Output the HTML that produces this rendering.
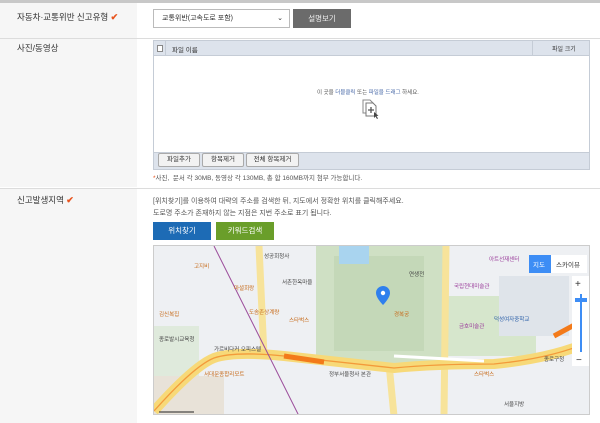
<!DOCTYPE html>
<html><head><meta charset="utf-8"><style>
*{margin:0;padding:0;box-sizing:border-box}
body{width:600px;height:423px;overflow:hidden;background:#fff;font-family:"Liberation Sans","Noto Sans CJK KR",sans-serif;font-size:8px;color:#333;position:relative}
.abs{position:absolute}
.lab{position:absolute;left:0;width:137px;background:#f6f6f6}
.lt{position:absolute;left:17px;font-size:8.5px;color:#333}
.ck{color:#e8541e;font-size:9px;font-weight:bold}
.line{position:absolute;left:0;width:600px;height:1px;background:#dcdcdc}
.btn{position:absolute;border:1px solid #aaa;background:#f2f2f2;border-radius:2px;font-size:6.5px;text-align:center;line-height:12px;height:14px;top:153px;color:#333}
</style></head><body>
<div class="abs" style="left:0;top:0;width:600px;height:3px;background:#c8c8c8"></div>
<div class="lab" style="top:3px;height:35px"></div>
<div class="lab" style="top:39px;height:148px"></div>
<div class="lab" style="top:189px;height:234px"></div>
<div class="line" style="top:38px"></div>
<div class="line" style="top:188px"></div>
<div class="lt" style="top:11px">자동차·교통위반 신고유형 <span class="ck">✔</span></div>
<div class="lt" style="top:42px">사진/동영상</div>
<div class="lt" style="top:194px">신고발생지역 <span class="ck">✔</span></div>

<div class="abs" style="left:153px;top:9px;width:137px;height:19px;border:1px solid #bbb;background:#fff;font-size:7px;line-height:17px;padding-left:8px">교통위반(고속도로 포함)<span style="position:absolute;right:6px;top:0;font-size:7px">⌄</span></div>
<div class="abs" style="left:293px;top:9px;width:58px;height:19px;background:#6b6b6b;color:#eee;font-size:7.5px;line-height:19px;text-align:center">설명보기</div>

<div class="abs" style="left:153px;top:40px;width:437px;height:130px;border:1px solid #c5ccd6;background:#fff"></div>
<div class="abs" style="left:154px;top:41px;width:435px;height:15px;background:#dde3ec;border-bottom:1px solid #c5ccd6"></div>
<div class="abs" style="left:157px;top:45px;width:6px;height:7px;border:1px solid #888;background:#fff"></div>
<div class="abs" style="left:165px;top:41px;width:1px;height:15px;background:#c5ccd6"></div>
<div class="abs" style="left:172px;top:44px;font-size:6.5px">파일 이름</div>
<div class="abs" style="left:532px;top:41px;width:1px;height:15px;background:#c5ccd6"></div>
<div class="abs" style="left:552px;top:44px;font-size:6px">파일 크기</div>
<div class="abs" style="left:317px;top:88px;font-size:5.5px;color:#555">이 곳을 <span style="color:#4a6aa8">더블클릭</span> 또는 <span style="color:#4a6aa8">파일을 드래그</span> 하세요.</div>
<svg class="abs" style="left:361px;top:99px" width="22" height="20" viewBox="0 0 22 20"><path d="M2 1h7l3 3v10H2z" fill="#fff" stroke="#888"/><path d="M5 4h7l3 3v10H5z" fill="#fff" stroke="#777"/><path d="M10 8v6M7 11h6" stroke="#555" stroke-width="1.3"/><path d="M13 13l0 6 1.5-1.5 1.5 2.5 1-.6-1.5-2.4 2-.3z" fill="#444"/></svg>
<div class="abs" style="left:154px;top:152px;width:435px;height:17px;background:#dde3ec;border-top:1px solid #c5ccd6"></div>
<div class="btn" style="left:158px;width:42px">파일추가</div>
<div class="btn" style="left:202px;width:42px">항목제거</div>
<div class="btn" style="left:246px;width:53px">전체 항목제거</div>
<div class="abs" style="left:153px;top:172px;font-size:6.5px;color:#555"><span style="color:#e8541e">*</span>사진, &nbsp;문서 각 30MB, 동영상 각 130MB, 총 합 160MB까지 첨부 가능합니다.</div>

<div class="abs" style="left:153px;top:196px;font-size:7px;color:#555">[위치찾기]를 이용하여 대략의 주소를 검색한 뒤, 지도에서 정확한 위치를 클릭해주세요.</div>
<div class="abs" style="left:153px;top:208px;font-size:7px;color:#555">도로명 주소가 존재하지 않는 지점은 지번 주소로 표기 됩니다.</div>
<div class="abs" style="left:153px;top:222px;width:58px;height:18px;background:#1d6bb5;color:#fff;font-size:7.5px;line-height:18px;text-align:center">위치찾기</div>
<div class="abs" style="left:216px;top:222px;width:58px;height:18px;background:#6a9e2a;color:#fff;font-size:7.5px;line-height:18px;text-align:center">키워드검색</div>

<div class="abs" style="left:153px;top:245px;width:437px;height:170px;border:1px solid #ccc;overflow:hidden;background:#eef0f2">
<svg width="437" height="170" viewBox="0 0 437 170">
<rect width="437" height="170" fill="#eef0f3"/>
<rect x="0" y="80" width="45" height="50" fill="#dfeadc"/>
<rect x="162" y="0" width="130" height="118" fill="#cfe0c4"/>
<rect x="180" y="10" width="90" height="95" fill="#c4d8b8"/>
<rect x="292" y="50" width="90" height="60" fill="#d6e6cc"/>
<rect x="185" y="0" width="30" height="18" fill="#a9d4ef"/>
<rect x="0" y="130" width="70" height="40" fill="#e8e2d8"/>
<rect x="345" y="30" width="70" height="60" fill="#dfe4ea"/>
<path d="M105 0 L110 110" stroke="#f7e39a" stroke-width="7" fill="none"/>
<path d="M292 0 L290 170" stroke="#f7e39a" stroke-width="7" fill="none"/>
<path d="M235 118 L240 170" stroke="#f7e39a" stroke-width="7" fill="none"/>
<path d="M0 165 Q40 120 60 112 Q80 105 130 110 L240 122 Q280 118 340 118 Q400 112 437 95" stroke="#f7d978" stroke-width="10" fill="none"/>
<path d="M0 165 Q40 120 60 112 Q80 105 130 110 L240 122 Q280 118 340 118 Q400 112 437 95" stroke="#f39a3a" stroke-width="1.3" fill="none"/>
<path d="M240 110 L330 115" stroke="#fff" stroke-width="3"/>
<path d="M130 110 L170 116" stroke="#f37a1a" stroke-width="5"/>
<path d="M400 90 L437 70" stroke="#f37a1a" stroke-width="5"/>
<path d="M60 0 L145 170" stroke="#9a4c9a" stroke-width="1"/>
<g font-size="5.5" font-family="Liberation Sans,Noto Sans CJK KR,sans-serif">
<text x="40" y="22" fill="#c76b1a">고지비</text><text x="110" y="12" fill="#444">성공회청사</text>
<text x="80" y="44" fill="#c76b1a">마셜회랑</text><text x="128" y="38" fill="#444">서촌한옥마을</text>
<text x="95" y="68" fill="#c76b1a">도솜존상계량</text><text x="135" y="76" fill="#c76b1a">스타벅스</text>
<text x="255" y="30" fill="#444">연생전</text><text x="240" y="70" fill="#c76b1a">경복궁</text>
<text x="300" y="42" fill="#9a3c9a">국립현대미술관</text><text x="305" y="82" fill="#9a3c9a">금호미술관</text>
<text x="340" y="75" fill="#2a5ea8">덕성여자중학교</text><text x="335" y="15" fill="#9a3c9a">아트선재센터</text>
<text x="60" y="105" fill="#444">가르비다커 오피스텔</text><text x="50" y="130" fill="#c76b1a">서대문종합리모트</text>
<text x="175" y="130" fill="#444">정부서울청사 본관</text><text x="320" y="130" fill="#c76b1a">스타벅스</text>
<text x="5" y="70" fill="#c76b1a">김신복집</text><text x="5" y="95" fill="#444">종로발시교육청</text>
<text x="390" y="115" fill="#444">종로구청</text><text x="350" y="160" fill="#444">서울지방</text>
</g>
<path d="M222 47 a7 7 0 0 1 14 0 c0 5 -7 12 -7 12 c0 0 -7 -7 -7 -12z" fill="#2f80ed"/><circle cx="229" cy="47" r="2.2" fill="#fff"/>
<rect x="375" y="9" width="58" height="18" fill="#fff"/><rect x="375" y="9" width="22" height="18" fill="#3d8df5"/>
<text x="379" y="21" font-size="6.5" fill="#fff" font-family="Noto Sans CJK KR,sans-serif">지도</text>
<text x="402" y="21" font-size="6.5" fill="#333" font-family="Noto Sans CJK KR,sans-serif">스카이뷰</text>
<rect x="418" y="30" width="17" height="90" fill="#fff"/>
<text x="421" y="41" font-size="10" fill="#333">+</text><text x="422" y="117" font-size="10" fill="#333">−</text>
<rect x="426" y="48" width="2" height="58" fill="#3d8df5"/><rect x="421" y="52" width="12" height="4" fill="#3d8df5"/>
<path d="M5 166 h35" stroke="#222" stroke-width="1"/>
</svg></div>
</body></html>
